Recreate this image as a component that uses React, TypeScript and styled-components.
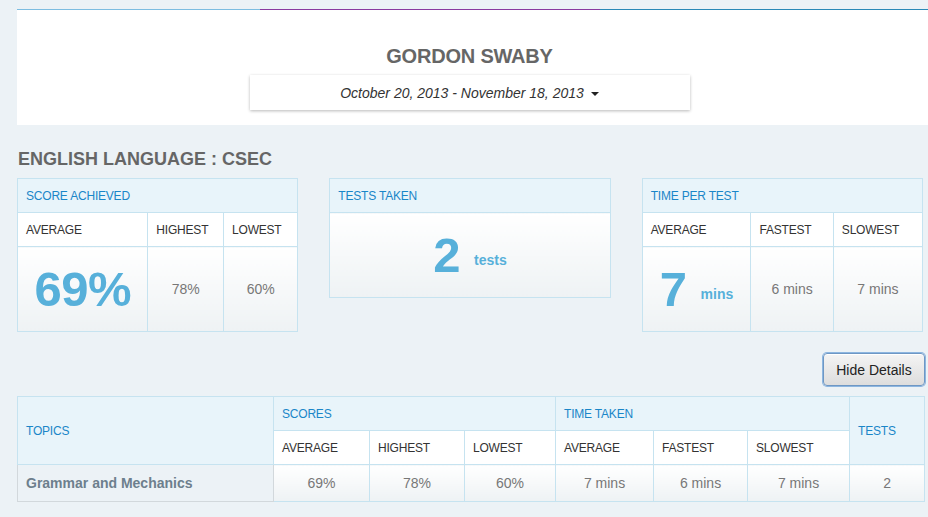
import React from 'react';
import styled, { createGlobalStyle } from 'styled-components';

const GlobalStyle = createGlobalStyle`
  body {
    margin: 0;
    background: #ecf2f6;
    font-family: 'Liberation Sans', Arial, sans-serif;
  }
`;

const BLUE = '#1a86c8';
const BIG = '#57b0da';
const LINE = '#c6e3f0';

const App: React.FC = () => {
  return (
    <>
      <GlobalStyle />
      <Page>
        <HeaderPanel>
          <ColorBar>
            <Segment $color="#7dbde1" $w={243} />
            <Segment $color="#8a3a9f" $w={340} />
            <Segment $color="#2a89b7" />
          </ColorBar>
          <Name>GORDON SWABY</Name>
          <DateBox>
            October 20, 2013 - November 18, 2013
            <Caret />
          </DateBox>
        </HeaderPanel>

        <SectionTitle>ENGLISH LANGUAGE : CSEC</SectionTitle>

        <Cards>
          <CardTable>
            <colgroup>
              <col style={{ width: '46.5%' }} />
              <col style={{ width: '27%' }} />
              <col />
            </colgroup>
            <tbody>
              <tr>
                <CardHead colSpan={3}>SCORE ACHIEVED</CardHead>
              </tr>
              <tr>
                <SubHead>AVERAGE</SubHead>
                <SubHead>HIGHEST</SubHead>
                <SubHead>LOWEST</SubHead>
              </tr>
              <tr>
                <ValueCell $h={84}>
                  <BigNumber>69%</BigNumber>
                </ValueCell>
                <ValueCell $h={84}>78%</ValueCell>
                <ValueCell $h={84}>60%</ValueCell>
              </tr>
            </tbody>
          </CardTable>

          <SingleCard>
            <CardTable>
              <tbody>
                <tr>
                  <CardHead>TESTS TAKEN</CardHead>
                </tr>
                <tr>
                  <ValueCell $h={84}>
                    <BigGroup>
                      <BigNumber>2</BigNumber>
                      <Unit>tests</Unit>
                    </BigGroup>
                  </ValueCell>
                </tr>
              </tbody>
            </CardTable>
          </SingleCard>

          <CardTable>
            <colgroup>
              <col style={{ width: '38.8%' }} />
              <col style={{ width: '29.4%' }} />
              <col />
            </colgroup>
            <tbody>
              <tr>
                <CardHead colSpan={3}>TIME PER TEST</CardHead>
              </tr>
              <tr>
                <SubHead>AVERAGE</SubHead>
                <SubHead>FASTEST</SubHead>
                <SubHead>SLOWEST</SubHead>
              </tr>
              <tr>
                <ValueCell $h={84}>
                  <BigGroup>
                    <BigNumber>7</BigNumber>
                    <Unit>mins</Unit>
                  </BigGroup>
                </ValueCell>
                <ValueCell $h={84}>6 mins</ValueCell>
                <ValueCell $h={84}>7 mins</ValueCell>
              </tr>
            </tbody>
          </CardTable>
        </Cards>

        <ButtonRow>
          <DetailsButton>Hide Details</DetailsButton>
        </ButtonRow>

        <DetailTable>
          <colgroup>
            <col style={{ width: 256 }} />
            <col style={{ width: 96 }} />
            <col style={{ width: 95 }} />
            <col style={{ width: 91 }} />
            <col style={{ width: 98 }} />
            <col style={{ width: 94 }} />
            <col style={{ width: 102 }} />
            <col />
          </colgroup>
          <tbody>
            <tr>
              <CardHead rowSpan={2}>TOPICS</CardHead>
              <CardHead colSpan={3}>SCORES</CardHead>
              <CardHead colSpan={3}>TIME TAKEN</CardHead>
              <CardHead rowSpan={2}>TESTS</CardHead>
            </tr>
            <tr>
              <SubHead>AVERAGE</SubHead>
              <SubHead>HIGHEST</SubHead>
              <SubHead>LOWEST</SubHead>
              <SubHead>AVERAGE</SubHead>
              <SubHead>FASTEST</SubHead>
              <SubHead>SLOWEST</SubHead>
            </tr>
            <tr>
              <TopicCell>Grammar and Mechanics</TopicCell>
              <ValueCell $h={36}>69%</ValueCell>
              <ValueCell $h={36}>78%</ValueCell>
              <ValueCell $h={36}>60%</ValueCell>
              <ValueCell $h={36}>7 mins</ValueCell>
              <ValueCell $h={36}>6 mins</ValueCell>
              <ValueCell $h={36}>7 mins</ValueCell>
              <ValueCell $h={36}>2</ValueCell>
            </tr>
          </tbody>
        </DetailTable>
      </Page>
    </>
  );
};

const Page = styled.div`
  padding: 9px 3px 16px 17px;
`;

const HeaderPanel = styled.div`
  background: #fff;
  margin-right: -3px;
  padding-bottom: 15px;
  display: flex;
  flex-direction: column;
  align-items: center;
`;

const ColorBar = styled.div`
  display: flex;
  width: 100%;
  height: 1px;
`;

const Segment = styled.div<{ $color: string; $w?: number }>`
  background: ${({ $color }) => $color};
  ${({ $w }) => ($w ? `width: ${$w}px;` : 'flex: 1;')}
`;

const Name = styled.h1`
  margin: 34px 0 0;
  font-size: 20px;
  line-height: 24px;
  font-weight: 700;
  color: #666;
  letter-spacing: -0.2px;
  position: relative;
  left: -3px;
`;

const DateBox = styled.div`
  margin-top: 7px;
  width: 440px;
  height: 35px;
  box-sizing: border-box;
  display: flex;
  align-items: center;
  justify-content: center;
  gap: 7px;
  background: #fff;
  box-shadow: 0 1px 3px rgba(0, 0, 0, 0.28);
  font-size: 14px;
  font-style: italic;
  color: #333;
  position: relative;
  left: -3px;
`;

const Caret = styled.span`
  width: 0;
  height: 0;
  border-left: 4px solid transparent;
  border-right: 4px solid transparent;
  border-top: 4px solid #222;
  margin-top: 2px;
`;

const SectionTitle = styled.h2`
  margin: 23px 0 8px 1px;
  font-size: 18px;
  line-height: 22px;
  font-weight: 700;
  color: #666;
`;

const Cards = styled.div`
  display: grid;
  grid-template-columns: 1fr 1fr 1fr;
  gap: 31px;
  margin-right: 2px;
  align-items: start;
`;

const SingleCard = styled.div``;

const CardTable = styled.table`
  width: 100%;
  border-collapse: collapse;
  table-layout: fixed;
  border: 1px solid ${LINE};
`;

const CardHead = styled.th`
  height: 33px;
  padding: 0 8px;
  text-align: left;
  font-size: 12px;
  font-weight: 400;
  color: ${BLUE};
  background: #e8f4fa;
  border: 1px solid ${LINE};
  letter-spacing: -0.2px;
`;

const SubHead = styled.td`
  height: 33px;
  padding: 0 8px;
  font-size: 12px;
  color: #333;
  background: #fff;
  border: 1px solid ${LINE};
  letter-spacing: -0.2px;
`;

const ValueCell = styled.td<{ $h: number }>`
  height: ${({ $h }) => $h}px;
  padding: 0;
  text-align: center;
  font-size: 14px;
  color: #777;
  background: linear-gradient(#ffffff, #eef2f4);
  border: 1px solid ${LINE};
`;

const BigGroup = styled.div`
  display: flex;
  justify-content: center;
  align-items: baseline;
  gap: 14px;
`;

const BigNumber = styled.span`
  font-size: 49px;
  line-height: 50px;
  font-weight: 700;
  color: ${BIG};
  letter-spacing: -0.5px;
`;

const Unit = styled.span`
  font-size: 14px;
  font-weight: 700;
  color: ${BIG};
  position: relative;
  top: -7px;
`;

const ButtonRow = styled.div`
  display: flex;
  justify-content: flex-end;
  margin-top: 21px;
`;

const DetailsButton = styled.button`
  width: 102px;
  height: 33px;
  border: 1px solid #6e97c4;
  border-radius: 4px;
  box-shadow: 0 0 0 1px #8db6e0, inset 0 1px 0 #fff;
  background: linear-gradient(#f4f4f4, #dddddd);
  font-family: 'Liberation Sans', Arial, sans-serif;
  font-size: 14px;
  color: #222;
  padding: 0;
`;

const DetailTable = styled.table`
  margin-top: 10px;
  width: 100%;
  border-collapse: collapse;
  table-layout: fixed;
  border: 1px solid ${LINE};
`;

const TopicCell = styled.td`
  height: 36px;
  padding: 0 8px;
  font-size: 14px;
  font-weight: 700;
  color: #6d7f8d;
  background: transparent;
  border: 1px solid #d2d8dc;
`;

export default App;
